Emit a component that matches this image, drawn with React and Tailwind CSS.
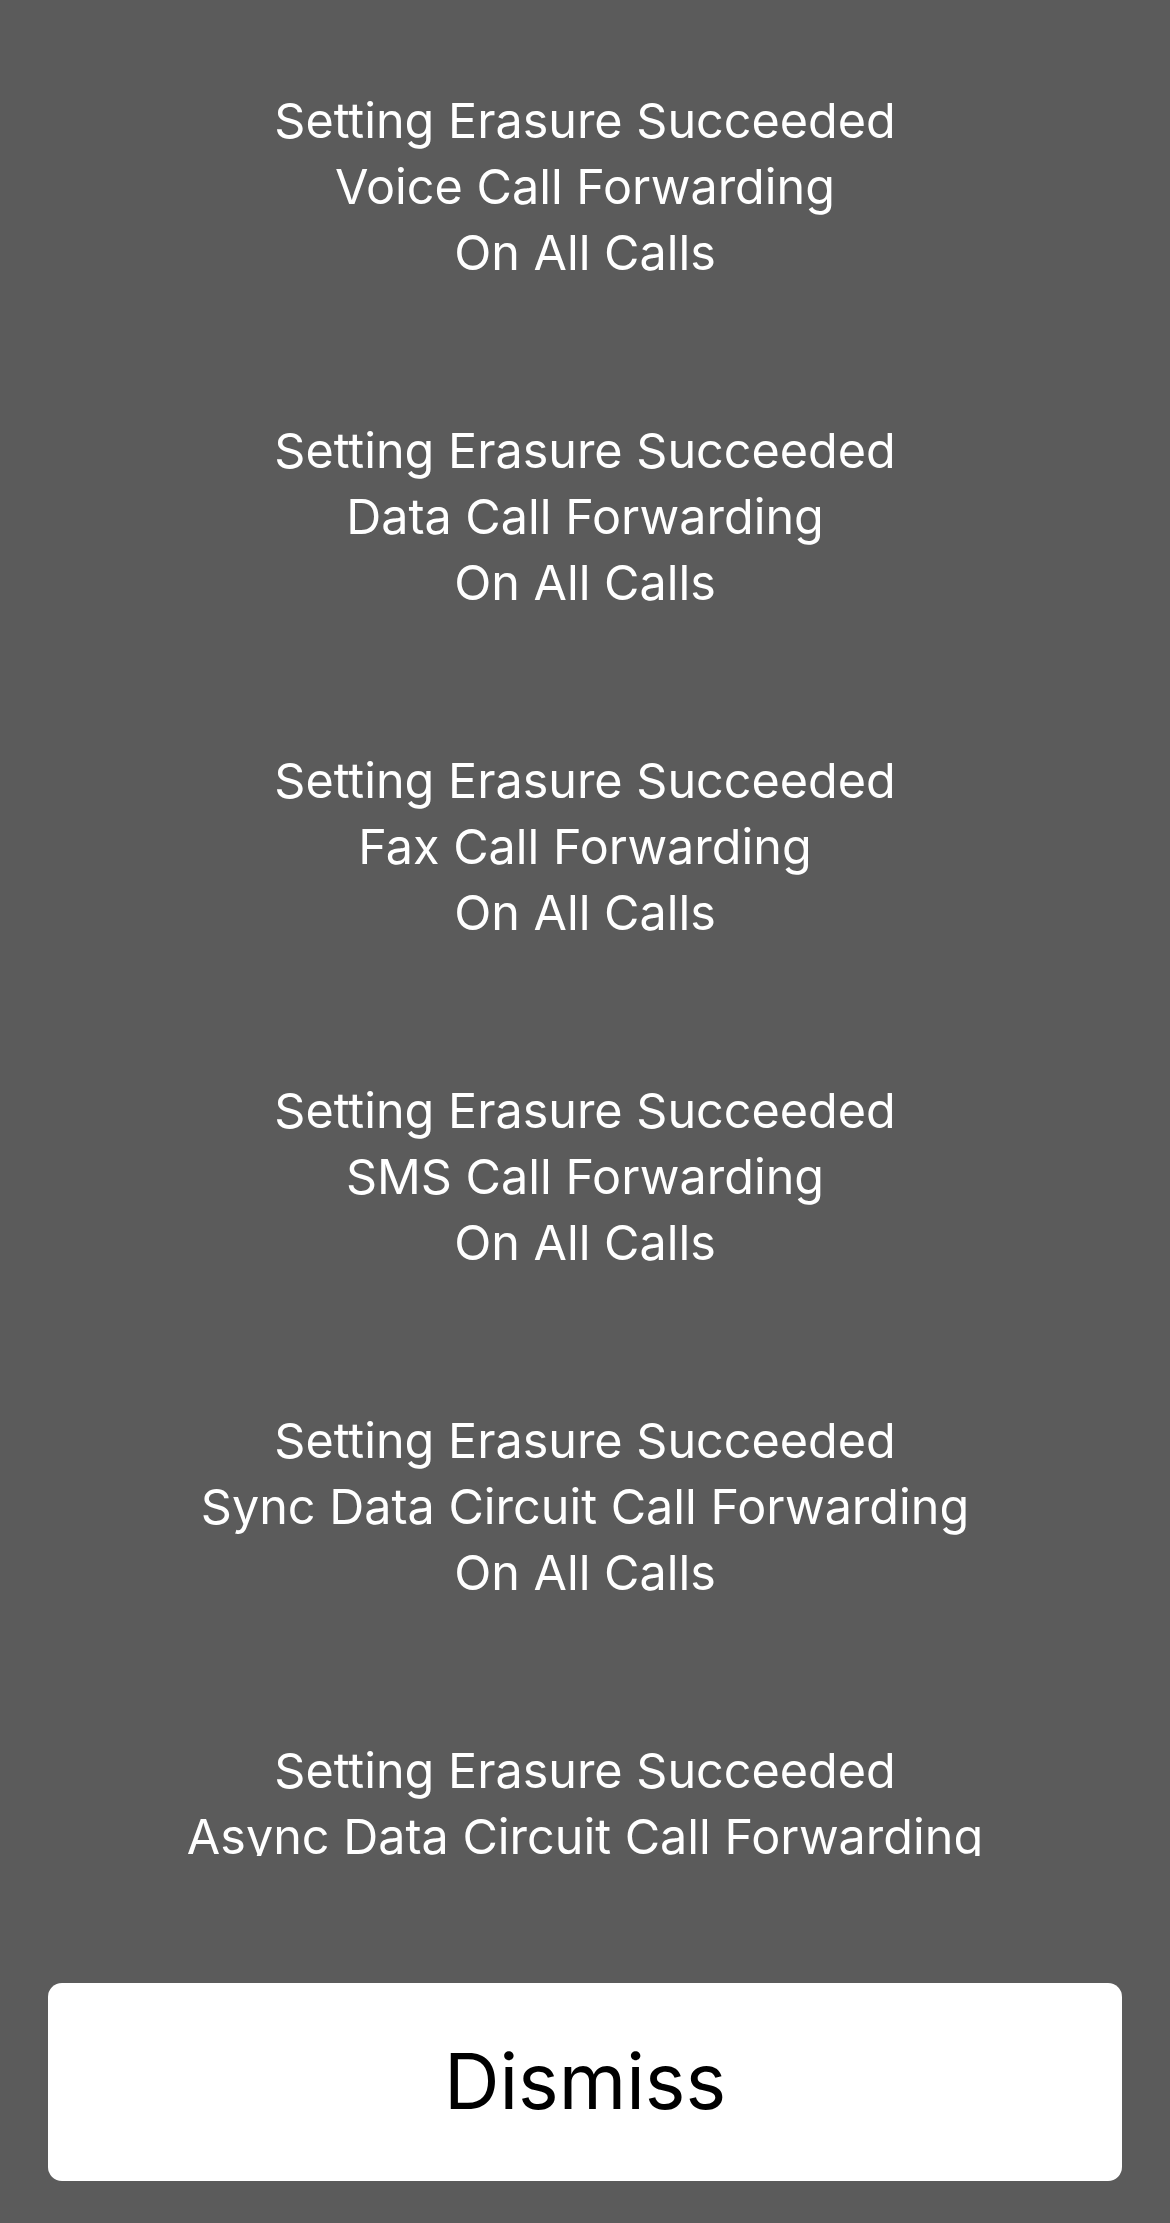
import React from "react";

const items = [
  "Voice Call Forwarding",
  "Data Call Forwarding",
  "Fax Call Forwarding",
  "SMS Call Forwarding",
  "Sync Data Circuit Call Forwarding",
  "Async Data Circuit Call Forwarding",
];

export default function App() {
  return (
    <div
      className="flex h-[2223px] w-[1170px] flex-col bg-[#5b5b5b]"
      style={{ fontFamily: "Inter, 'Noto Sans', sans-serif" }}
    >
      <div className="h-[1856px] overflow-hidden">
        <div className="flex flex-col gap-[132px] pt-[88px] text-center text-[48.5px] leading-[66px] text-white">
          {items.map((t) => (
            <div key={t}>
              <div>Setting Erasure Succeeded</div>
              <div>{t}</div>
              <div>On All Calls</div>
            </div>
          ))}
        </div>
      </div>
      <button className="mx-[48px] mt-[127px] flex h-[198px] items-center justify-center rounded-[14px] bg-white text-[77px] text-black">
        Dismiss
      </button>
    </div>
  );
}
